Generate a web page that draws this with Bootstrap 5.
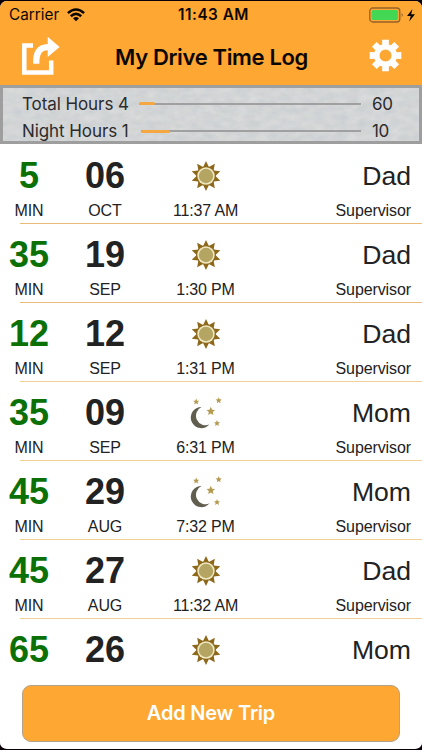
<!DOCTYPE html>
<html lang="en">
<head>
<meta charset="utf-8">
<meta name="viewport" content="width=device-width, initial-scale=1">
<title>My Drive Time Log</title>
<link rel="stylesheet" href="https://cdn.jsdelivr.net/npm/bootstrap@5.3.0/dist/css/bootstrap.min.css">
<style>
body{background:#0a0008;font-family:"Liberation Sans",Arial,sans-serif;color:#222;height:750px;overflow:hidden;padding:1px 0}
.phone{height:748px;border-radius:7px;background:#fff}
.ui{font-family:Inter,sans-serif}
.topbar{background:#fea733;height:84px;color:#0c0602}
.status{height:27px;padding:0 6px 0 9px;font-size:15.3px;line-height:27px}
.status>div{flex:1 1 0}
.clock{font-weight:600;letter-spacing:.5px;padding-left:2px}
.titlebar{height:57px;padding:0 20px 0 22px}
.apptitle{font-size:22px;font-weight:600;letter-spacing:-.35px;line-height:58px;padding-right:6px}
.panel{height:59px;border:3px solid #9e9e9e;background:#d3d5d6;font-size:17px;line-height:28px;color:#2b2b2d}
.paper{position:absolute;inset:0;width:100%;height:100%}
.meters{padding-top:2px}
.meter{position:relative;height:27.5px;padding-left:19px}
.meter-name{letter-spacing:-.08px}
.meter-track{height:2px;background:#a0a0a0}
.meter-fill{height:3px;background:#f5a742;border-radius:2px;margin-top:-.5px}
.meter-max{width:58px;padding-left:11px;letter-spacing:-.4px}
.trips{height:528px}
.trip{height:79px;padding-top:14px}
.trip::after{content:"";display:block;height:1px;background:#f3cf98;margin:3px 0 0 20px}
.trip:first-child::after,.trip:nth-child(2)::after{background:#e9bb78}
.trip:last-child{height:54px}
.trip:last-child::after{display:none}
.c-min{width:58px}.c-date{width:94px}.c-time{width:107px}
.c-who{padding-right:11px}
.big{font-size:36px;line-height:36px;font-weight:700}
.green{color:#0b7006}
.who{font-size:26.6px;line-height:36px}
.lbl{font-size:16px;line-height:18px;margin-top:8px;letter-spacing:-.1px}
.c-time .lbl{letter-spacing:-.15px}
.ico{height:36px}
.foot{height:76px;padding:13px 22px 0}
.btn-add{height:57px;background:#fea733;border:1.5px solid #b2a28b;border-radius:9px;color:#fff;font-size:20px;font-weight:600;letter-spacing:-.2px;line-height:55px}
</style>
<script src="https://cdn.jsdelivr.net/npm/bootstrap@5.3.0/dist/js/bootstrap.bundle.min.js"></script>
</head>
<body>
<svg width="0" height="0" class="position-absolute">
<defs>
<g id="sun"><path id="rays" fill="#8d681b"/><circle r="9.8" fill="#8d681b"/><circle r="8.7" fill="#f0e9c4"/><circle r="7.2" fill="#b4a662"/></g>
<path id="star" d="M0-4.2 1.2-1.4 4.1-1.2 1.9.8 2.5 3.7 0 2.2-2.5 3.7-1.9.8-4.1-1.2-1.2-1.4Z" fill="#b49b4f"/>
<g id="moon"><path d="M-4.5-6A10.6 10.6 0 1 0 3.6 11.3 9 9 0 0 1-4.5-6Z" fill="#615e50"/><use href="#star" transform="translate(-9.8 -11.3) scale(.75)"/><use href="#star" transform="translate(12.7 -12.6) scale(.75)"/><use href="#star" transform="translate(4.8 -1.8) scale(1.05)"/><use href="#star" transform="translate(11 10.2) scale(.75)"/></g>
</defs></svg>
<main class="phone d-flex flex-column overflow-hidden">
<header class="topbar ui flex-shrink-0">
<div class="status d-flex align-items-center">
<div class="d-flex align-items-center"><span>Carrier</span>
<svg class="ms-2" width="18" height="14" viewBox="0 0 18 14" fill="none" stroke="#0c0602" stroke-width="2.5"><path d="M.9 5.2Q9-2.2 17.1 5.2M3.8 8.2Q9 3.5 14.2 8.2"/><path d="M6 10.3Q9 7.8 12 10.3L9 13.3Z" fill="#0c0602" stroke="none"/></svg></div>
<span class="clock">11:43 AM</span>
<div class="d-flex align-items-center justify-content-end">
<svg width="47" height="18" viewBox="0 0 47 18"><rect x=".8" y="2" width="30" height="14" rx="3" fill="none" stroke="#946229" stroke-width="1.3"/><rect x="2.7" y="4" width="26.2" height="10" rx="1.5" fill="#43d854"/><path d="M32.6 7Q35 9 32.6 11Z" fill="#946229"/><path d="M43.5 3 38 10H41.7L40.2 15.4 46 8.3H42.2Z" fill="#0c0602"/></svg></div>
</div>
<div class="titlebar d-flex justify-content-between">
<svg class="mt-2" width="38" height="40" viewBox="0 0 38 40"><path d="M11 9.5H2.3V36.4H29.2V24.5" fill="none" stroke="#fff" stroke-width="4.5"/><path d="M11.2 27.7C10.5 15.5 15 8.6 25.7 8V.8L37.6 11 25.7 21V14.3C19.5 14.6 17.4 18 17.4 27.7Z" fill="#fff"/></svg>
<h1 class="apptitle m-0">My Drive Time Log</h1>
<svg class="mt-2" width="33" height="40" viewBox="-16.5 -19.5 33 40"><g fill="#fff"><path id="gear" fill-rule="evenodd"/></g></svg>
</div>
</header>
<section class="panel ui position-relative flex-shrink-0">
<svg class="paper" aria-hidden="true"><filter id="grain" color-interpolation-filters="sRGB"><feTurbulence type="fractalNoise" baseFrequency=".09 .15" numOctaves="4" seed="8"/><feColorMatrix values=".08 0 0 0 .785 .07 .01 0 0 .795 .05 0 .03 0 .80 0 0 0 0 1"/></filter><rect width="100%" height="100%" filter="url(#grain)"/></svg>
<div class="meters">
<div class="meter d-flex align-items-center"><span class="meter-name" style="width:117px">Total Hours 4</span><div class="meter-track flex-grow-1"><div class="meter-fill" style="width:7%"></div></div><span class="meter-max">60</span></div>
<div class="meter d-flex align-items-center"><span class="meter-name" style="width:119px">Night Hours 1</span><div class="meter-track flex-grow-1"><div class="meter-fill" style="width:13%"></div></div><span class="meter-max">10</span></div>
</div>
</section>
<section class="trips overflow-hidden flex-shrink-0" id="trips"></section>
<footer class="foot bg-white ui"><button class="btn btn-add w-100 p-0">Add New Trip</button></footer>
</main>
<script>
const point=(r,a)=>(r*Math.cos(a)).toFixed(2)+' '+(r*Math.sin(a)).toFixed(2);
let rays=[];
for(let i=0;i<20;i++)rays.push(point(i%2?9.4:15,i*Math.PI/10-Math.PI/2));
document.getElementById('rays').setAttribute('d','M'+rays.join('L')+'Z');
let teeth=[];
for(let i=0;i<8;i++){const a=i*Math.PI/4;teeth.push(point(11.6,a-.29),point(16.2,a-.21),point(16.2,a+.21),point(11.6,a+.29));}
document.getElementById('gear').setAttribute('d','M'+teeth.join('L')+'ZM6 0A6 6 0 1 0-6 0A6 6 0 1 0 6 0Z');
const trips=[[5,'06','OCT','sun','11:37 AM','Dad'],[35,'19','SEP','sun','1:30 PM','Dad'],[12,'12','SEP','sun','1:31 PM','Dad'],[35,'09','SEP','moon','6:31 PM','Mom'],[45,'29','AUG','moon','7:32 PM','Mom'],[45,'27','AUG','sun','11:32 AM','Dad'],[65,'26','','sun','','Mom']];
const label=text=>text?`<div class="lbl">${text}</div>`:'';
document.getElementById('trips').innerHTML=trips.map(([min,day,month,icon,time,who])=>`
<article class="trip"><div class="d-flex text-center">
<div class="c-min"><div class="big green">${min}</div>${label(month&&'MIN')}</div>
<div class="c-date"><div class="big">${day}</div>${label(month)}</div>
<div class="c-time"><svg class="ico d-block mx-auto" width="36" viewBox="-18 -18 36 36"><use href="#${icon}"/></svg>${label(time)}</div>
<div class="c-who flex-grow-1 text-end"><div class="who">${who}</div>${label(month&&'Supervisor')}</div>
</div></article>`).join('');
</script>
</body>
</html>
